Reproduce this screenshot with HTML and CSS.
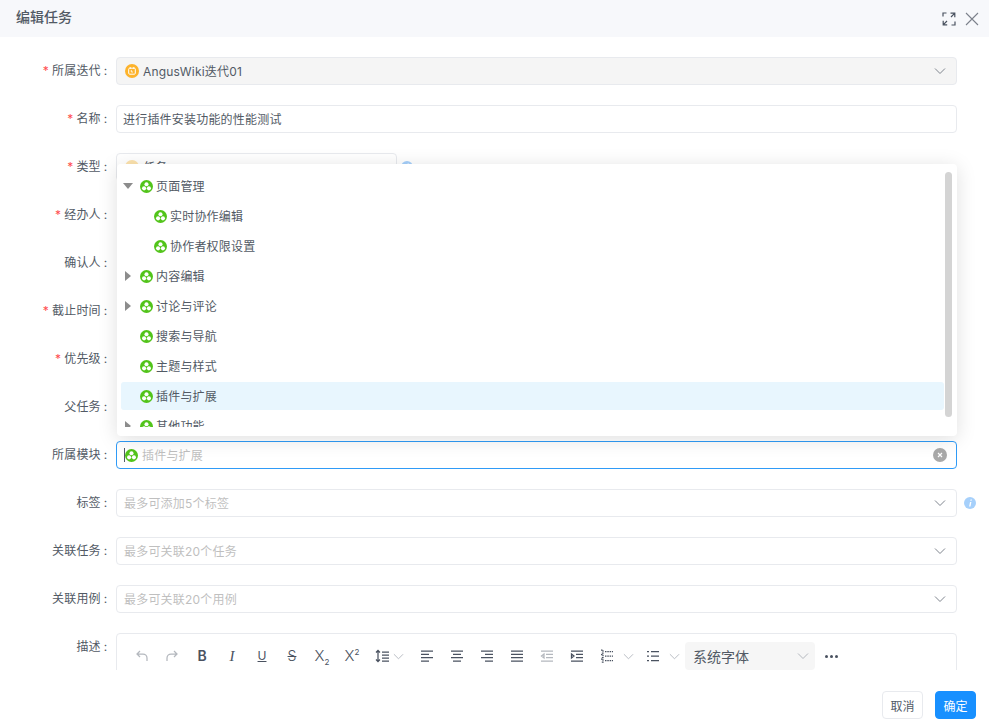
FILE: index.html
```html
<!DOCTYPE html>
<html lang="zh-CN">
<head>
    <meta charset="UTF-8">
    <meta name="viewport" content="width=device-width, initial-scale=1.0">
    <title>编辑任务</title>
    <link rel="stylesheet" href="styles.css">
</head>
<body>
    <svg class="sprites" width="0" height="0">
        <symbol id="module" viewBox="0 0 14 14">
            <circle cx="7" cy="7" r="7" fill="#52c41a"/>
            <circle cx="7" cy="4.6" r="2.2" fill="#fff"/>
            <circle cx="4.4" cy="9" r="2.2" fill="#fff"/>
            <circle cx="9.600" cy="9" r="2.2" fill="#fff"/>
        </symbol>
        <symbol id="chevron" viewBox="0 0 12 12">
            <path d="M1 3.500 6 8.500 11 3.500" fill="none" stroke="currentColor" stroke-width="1"/>
        </symbol>
        <symbol id="info" viewBox="0 0 12 12">
            <circle cx="6" cy="6" r="6" fill="#a6d0fb"/>
            <path d="M6.600 2.400h1.300l-.3 1.300H6.300zM6 5h1.400l-.9 4.500H5.100z" fill="#fff"/>
        </symbol>
    </svg>

    <header class="modal-head">
        <h1>编辑任务</h1>
        <div class="head-actions">
            <svg width="14" height="14" viewBox="0 0 14 14" fill="none" stroke="#4a5260" stroke-width="1.2">
                <path d="M1 4.500V1h3.500M13 9.500V13H9.500M8.500 1.200H12.800v4M12.600 1.400 9 5M1.200 8.800V12.800h4M1.400 12.600 5 9"/>
            </svg>
            <svg width="14" height="14" viewBox="0 0 14 14" fill="none" stroke="#7b818b" stroke-width="1.1">
                <path d="M1 1 13 13M13 1 1 13"/>
            </svg>
        </div>
    </header>

    <main class="modal-body">
        <div class="form-row">
            <label class="req">所属迭代</label>
            <div class="field disabled">
                <svg class="field-icon" width="14" height="14" viewBox="0 0 14 14">
                    <circle cx="7" cy="7" r="7" fill="#fdb32b"/>
                    <rect x="3.700" y="4.200" width="6.600" height="6" rx="1" fill="none" stroke="#fff"/>
                    <path d="M5.200 3v2M8.800 3v2" stroke="#fff" stroke-width=".9"/>
                    <path d="M6.300 6v2h1.700" fill="none" stroke="#fff" stroke-width=".8"/>
                </svg>
                <span class="value">AngusWiki迭代01</span>
                <svg class="chevron"><use href="#chevron"/></svg>
            </div>
        </div>
        <div class="form-row">
            <label class="req">名称</label>
            <div class="field"><span class="value">进行插件安装功能的性能测试</span></div>
        </div>
        <div class="form-row">
            <label class="req">类型</label>
            <div class="field type-field">
                <svg class="field-icon" width="14" height="14"><circle cx="7" cy="7" r="7" fill="#fde3ae"/></svg>
                <span class="value">任务</span>
            </div>
            <svg class="info"><use href="#info"/></svg>
        </div>
        <div class="form-row">
            <label class="req">经办人</label>
        </div>
        <div class="form-row">
            <label>确认人</label>
        </div>
        <div class="form-row">
            <label class="req">截止时间</label>
        </div>
        <div class="form-row">
            <label class="req">优先级</label>
        </div>
        <div class="form-row">
            <label>父任务</label>
        </div>
        <div class="form-row">
            <label>所属模块</label>
            <div class="field focused">
                <span class="caret"></span>
                <svg class="module-icon"><use href="#module"/></svg>
                <span class="value placeholder">插件与扩展</span>
                <span class="clear">
                    <svg width="6" height="6" viewBox="0 0 6 6" fill="none" stroke="#fff" stroke-width="1.2"><path d="M1 1 5 5M5 1 1 5"/></svg>
                </span>
            </div>
        </div>
        <div class="form-row">
            <label>标签</label>
            <div class="field">
                <span class="value placeholder">最多可添加5个标签</span>
                <svg class="chevron"><use href="#chevron"/></svg>
            </div>
            <svg class="info"><use href="#info"/></svg>
        </div>
        <div class="form-row">
            <label>关联任务</label>
            <div class="field">
                <span class="value placeholder">最多可关联20个任务</span>
                <svg class="chevron"><use href="#chevron"/></svg>
            </div>
        </div>
        <div class="form-row">
            <label>关联用例</label>
            <div class="field">
                <span class="value placeholder">最多可关联20个用例</span>
                <svg class="chevron"><use href="#chevron"/></svg>
            </div>
        </div>
        <div class="form-row">
            <label>描述</label>
            <div class="editor">
                <div class="toolbar">
                    <svg class="tool undo" viewBox="0 0 14 14"><path d="M5 2 2 5l3 3M2 5h6a4 4 0 0 1 4 4v3"/></svg>
                    <svg class="tool redo" viewBox="0 0 14 14"><path d="M9 2l3 3-3 3M12 5H6a4 4 0 0 0-4 4v3"/></svg>
                    <span class="tool-text bold">B</span>
                    <span class="tool-text italic">I</span>
                    <span class="tool-text under">U</span>
                    <span class="tool-text strike">S</span>
                    <span class="tool-text script"><span>X<sub>2</sub></span></span>
                    <span class="tool-text script"><span>X<sup>2</sup></span></span>
                    <svg class="tool" viewBox="0 0 14 14"><path d="M3 1.500v11M1 3.500l2-2 2 2M1 10.500l2 2 2-2M7 3h7M7 6h7M7 9h7M7 12h7"/></svg>
                    <svg class="tool-arrow first"><use href="#chevron"/></svg>
                    <svg class="tool" viewBox="0 0 14 14"><path d="M1 2h12M1 5.300h8M1 8.700h12M1 12h8"/></svg>
                    <svg class="tool" viewBox="0 0 14 14"><path d="M1 2h12M3 5.300h8M1 8.700h12M3 12h8"/></svg>
                    <svg class="tool" viewBox="0 0 14 14"><path d="M1 2h12M5 5.300h8M1 8.700h12M5 12h8"/></svg>
                    <svg class="tool" viewBox="0 0 14 14"><path d="M1 2h12M1 5.300h12M1 8.700h12M1 12h12"/></svg>
                    <svg class="tool faint" viewBox="0 0 14 14"><path d="M1 2h12M6 5.300h7M6 8.700h7M1 12h12M4 5 1.500 7 4 9z"/></svg>
                    <svg class="tool" viewBox="0 0 14 14"><path d="M1 2h12M6 5.300h7M6 8.700h7M1 12h12M1.500 5 4 7 1.500 9z"/></svg>
                    <svg class="tool" viewBox="0 0 14 14"><path d="M5 2.500h8M5 7h8M5 11.500h8M1 1h2v3H1M1 5.500h2v3H1M1 10h2v3H1" stroke-dasharray="1.500 .8"/></svg>
                    <svg class="tool-arrow"><use href="#chevron"/></svg>
                    <svg class="tool bullets" viewBox="0 0 14 14"><path d="M5 2.500h8M5 7h8M5 11.500h8M1 2.500h2M1 7h2M1 11.500h2"/></svg>
                    <svg class="tool-arrow"><use href="#chevron"/></svg>
                    <div class="font-select">
                        <span>系统字体</span>
                        <svg class="chevron"><use href="#chevron"/></svg>
                    </div>
                    <span class="more"><i></i><i></i><i></i></span>
                </div>
            </div>
        </div>

        <div class="dropdown">
            <div class="tree">
                <div class="node"><span class="arrow open"></span><svg class="node-icon"><use href="#module"/></svg><span class="value">页面管理</span></div>
                <div class="node child"><svg class="node-icon"><use href="#module"/></svg><span class="value">实时协作编辑</span></div>
                <div class="node child"><svg class="node-icon"><use href="#module"/></svg><span class="value">协作者权限设置</span></div>
                <div class="node"><span class="arrow"></span><svg class="node-icon"><use href="#module"/></svg><span class="value">内容编辑</span></div>
                <div class="node"><span class="arrow"></span><svg class="node-icon"><use href="#module"/></svg><span class="value">讨论与评论</span></div>
                <div class="node"><span class="arrow none"></span><svg class="node-icon"><use href="#module"/></svg><span class="value">搜索与导航</span></div>
                <div class="node"><span class="arrow none"></span><svg class="node-icon"><use href="#module"/></svg><span class="value">主题与样式</span></div>
                <div class="node selected"><span class="arrow none"></span><svg class="node-icon"><use href="#module"/></svg><span class="value">插件与扩展</span></div>
                <div class="node"><span class="arrow"></span><svg class="node-icon"><use href="#module"/></svg><span class="value">其他功能</span></div>
            </div>
            <div class="scrollbar"></div>
        </div>
    </main>

    <footer class="modal-foot">
        <button type="button" class="btn">取消</button>
        <button type="button" class="btn primary">确定</button>
    </footer>
</body>
</html>
```
FILE: styles.css
```css
* {
    box-sizing: border-box;
}
html, body {
    height: 100%;
}
body {
    margin: 0;
    display: flex;
    flex-direction: column;
    overflow: hidden;
    background: #fff;
    color: #525a65;
    font-family: Inter, "Noto Sans CJK SC", sans-serif;
    font-size: 12px;
    letter-spacing: 0.2px;
}
.sprites {
    position: absolute;
}
.modal-head {
    flex: none;
    height: 37px;
    padding: 0 10px 0 16px;
    display: flex;
    align-items: center;
    justify-content: space-between;
    background: #f7f8fb;
}
.modal-head h1 {
    margin: 0 0 6px;
    font-size: 14px;
    font-weight: 500;
    letter-spacing: 0;
}
.head-actions {
    display: flex;
    align-items: center;
    gap: 9px;
}
.modal-body {
    position: relative;
    height: 633px;
    padding: 20px 0 0;
    overflow: hidden;
    display: flex;
    flex-direction: column;
    gap: 20px;
}
.form-row {
    flex: none;
    height: 28px;
    display: flex;
    align-items: center;
    padding-right: 32px;
}
.form-row label {
    flex: none;
    width: 107.5px;
    text-align: right;
    line-height: 28px;
}
.form-row label::after {
    content: ":";
    margin-left: 3px;
}
.req::before {
    content: "*";
    color: #ff4d4f;
    margin-right: 3px;
}
.field {
    flex: 1;
    height: 28px;
    margin-left: 8.5px;
    padding: 0 10px 0 6px;
    display: flex;
    align-items: center;
    border: 1px solid #e8eaee;
    border-radius: 4px;
    background: #fff;
}
.field.disabled {
    background: #f5f5f5;
}
.field.type-field {
    flex: none;
    width: 281px;
}
.field.focused {
    position: relative;
    border-color: #2f9bf7;
}
.field-icon {
    flex: none;
    width: 14px;
    height: 14px;
    margin: 0 4px 0 2px;
}
.module-icon {
    flex: none;
    width: 13px;
    height: 13px;
    margin-right: 3px;
}
.value {
    flex: 1;
    padding-bottom: 2px;
    white-space: nowrap;
}
.placeholder {
    margin-left: 1px;
    color: #bfbfbf;
}
.caret {
    flex: none;
    width: 1px;
    height: 14px;
    margin-left: 1px;
    background: #525a65;
}
.chevron {
    flex: none;
    width: 12px;
    height: 12px;
    color: #7f858e;
}
.clear {
    flex: none;
    width: 14px;
    height: 14px;
    margin-right: -1px;
    display: flex;
    align-items: center;
    justify-content: center;
    border-radius: 50%;
    background: #a9a9a9;
}
.info {
    position: absolute;
    right: 13px;
    width: 12px;
    height: 12px;
}
.type-field + .info {
    left: 401px;
    right: auto;
}
.editor {
    flex: 1;
    height: 60px;
    align-self: flex-start;
    margin-left: 8.5px;
    border: 1px solid #e8eaee;
    border-radius: 4px;
}
.toolbar {
    height: 28px;
    margin-top: 8px;
    padding-left: 18px;
    display: flex;
    align-items: center;
    gap: 16px;
}
.tool {
    flex: none;
    width: 14px;
    height: 14px;
    fill: none;
    stroke: #4a5260;
    stroke-width: 1.25;
}
.tool.undo, .tool.redo, .tool.faint {
    stroke: #b4b8be;
}
.tool-text {
    flex: none;
    width: 14px;
    height: 14px;
    display: flex;
    align-items: center;
    justify-content: center;
    color: #4a5260;
    font-size: 14px;
    line-height: 14px;
    letter-spacing: 0;
}
.tool-text.bold {
    font-weight: 600;
}
.tool-text.italic {
    font-family: "Liberation Serif", serif;
    font-size: 15px;
    font-style: italic;
}
.tool-text.under {
    font-size: 12px;
    text-decoration: underline;
}
.tool-text.strike {
    font-weight: 300;
    text-decoration: line-through;
}
.tool-text.script {
    font-weight: 300;
    font-size: 15px;
}
.tool-text sub, .tool-text sup {
    font-size: 8px;
    line-height: 0;
    font-weight: 400;
}
.tool-arrow {
    flex: none;
    width: 11px;
    height: 11px;
    margin-left: -7px;
    color: #b4b8be;
}
.tool-arrow.first {
    margin-left: -12px;
}
.tool.bullets {
    margin-left: -4px;
}
.font-select {
    flex: none;
    width: 130px;
    height: 28px;
    margin-left: -11px;
    padding: 0 6px 0 8px;
    display: flex;
    align-items: center;
    justify-content: space-between;
    border-radius: 4px;
    background: #f6f6f6;
    font-size: 14px;
    letter-spacing: 0;
}
.font-select .chevron {
    color: #b4b8be;
}
.more {
    display: flex;
    gap: 2px;
    margin-left: -6px;
}
.more i {
    width: 3px;
    height: 3px;
    border-radius: 50%;
    background: #4a5260;
}
.dropdown {
    position: absolute;
    left: 117px;
    top: 127px;
    width: 840px;
    height: 272px;
    overflow: hidden;
    background: #fff;
    border-radius: 4px;
    box-shadow: 0 3px 20px rgba(0, 0, 0, 0.13);
}
.tree {
    height: 263px;
    overflow: hidden;
    padding: 8px 0 0 4px;
    width: 827px;
}
.node {
    height: 28px;
    margin-bottom: 2px;
    padding-left: 3px;
    display: flex;
    align-items: center;
    border-radius: 3px;
}
.node.child {
    padding-left: 33px;
}
.node.selected {
    background: #e8f6fe;
}
.arrow {
    flex: none;
    width: 0;
    height: 0;
    margin: 0 9px 0 1px;
    border-style: solid;
    border-width: 5px 0 5px 6px;
    border-color: transparent transparent transparent #8c8c8c;
}
.arrow.open {
    margin: 0 7px 0 -1px;
    border-width: 6px 5px 0;
    border-color: #8c8c8c transparent transparent;
}
.arrow.none {
    border-color: transparent;
}
.node-icon {
    flex: none;
    width: 13px;
    height: 13px;
    margin-right: 3px;
}
.scrollbar {
    position: absolute;
    right: 5px;
    top: 8px;
    width: 7px;
    height: 245px;
    border-radius: 4px;
    background: #d4d4d4;
}
.modal-foot {
    flex: 1;
    padding: 14px 13px 0 0;
    display: flex;
    align-items: center;
    justify-content: flex-end;
    gap: 12px;
}
.btn {
    width: 41px;
    height: 28px;
    padding: 0;
    border: 1px solid #e8eaee;
    border-radius: 4px;
    background: #fff;
    color: #525a65;
    font: inherit;
    letter-spacing: 0;
    cursor: pointer;
}
.btn.primary {
    border-color: #1890ff;
    background: #1890ff;
    color: #fff;
}
```
